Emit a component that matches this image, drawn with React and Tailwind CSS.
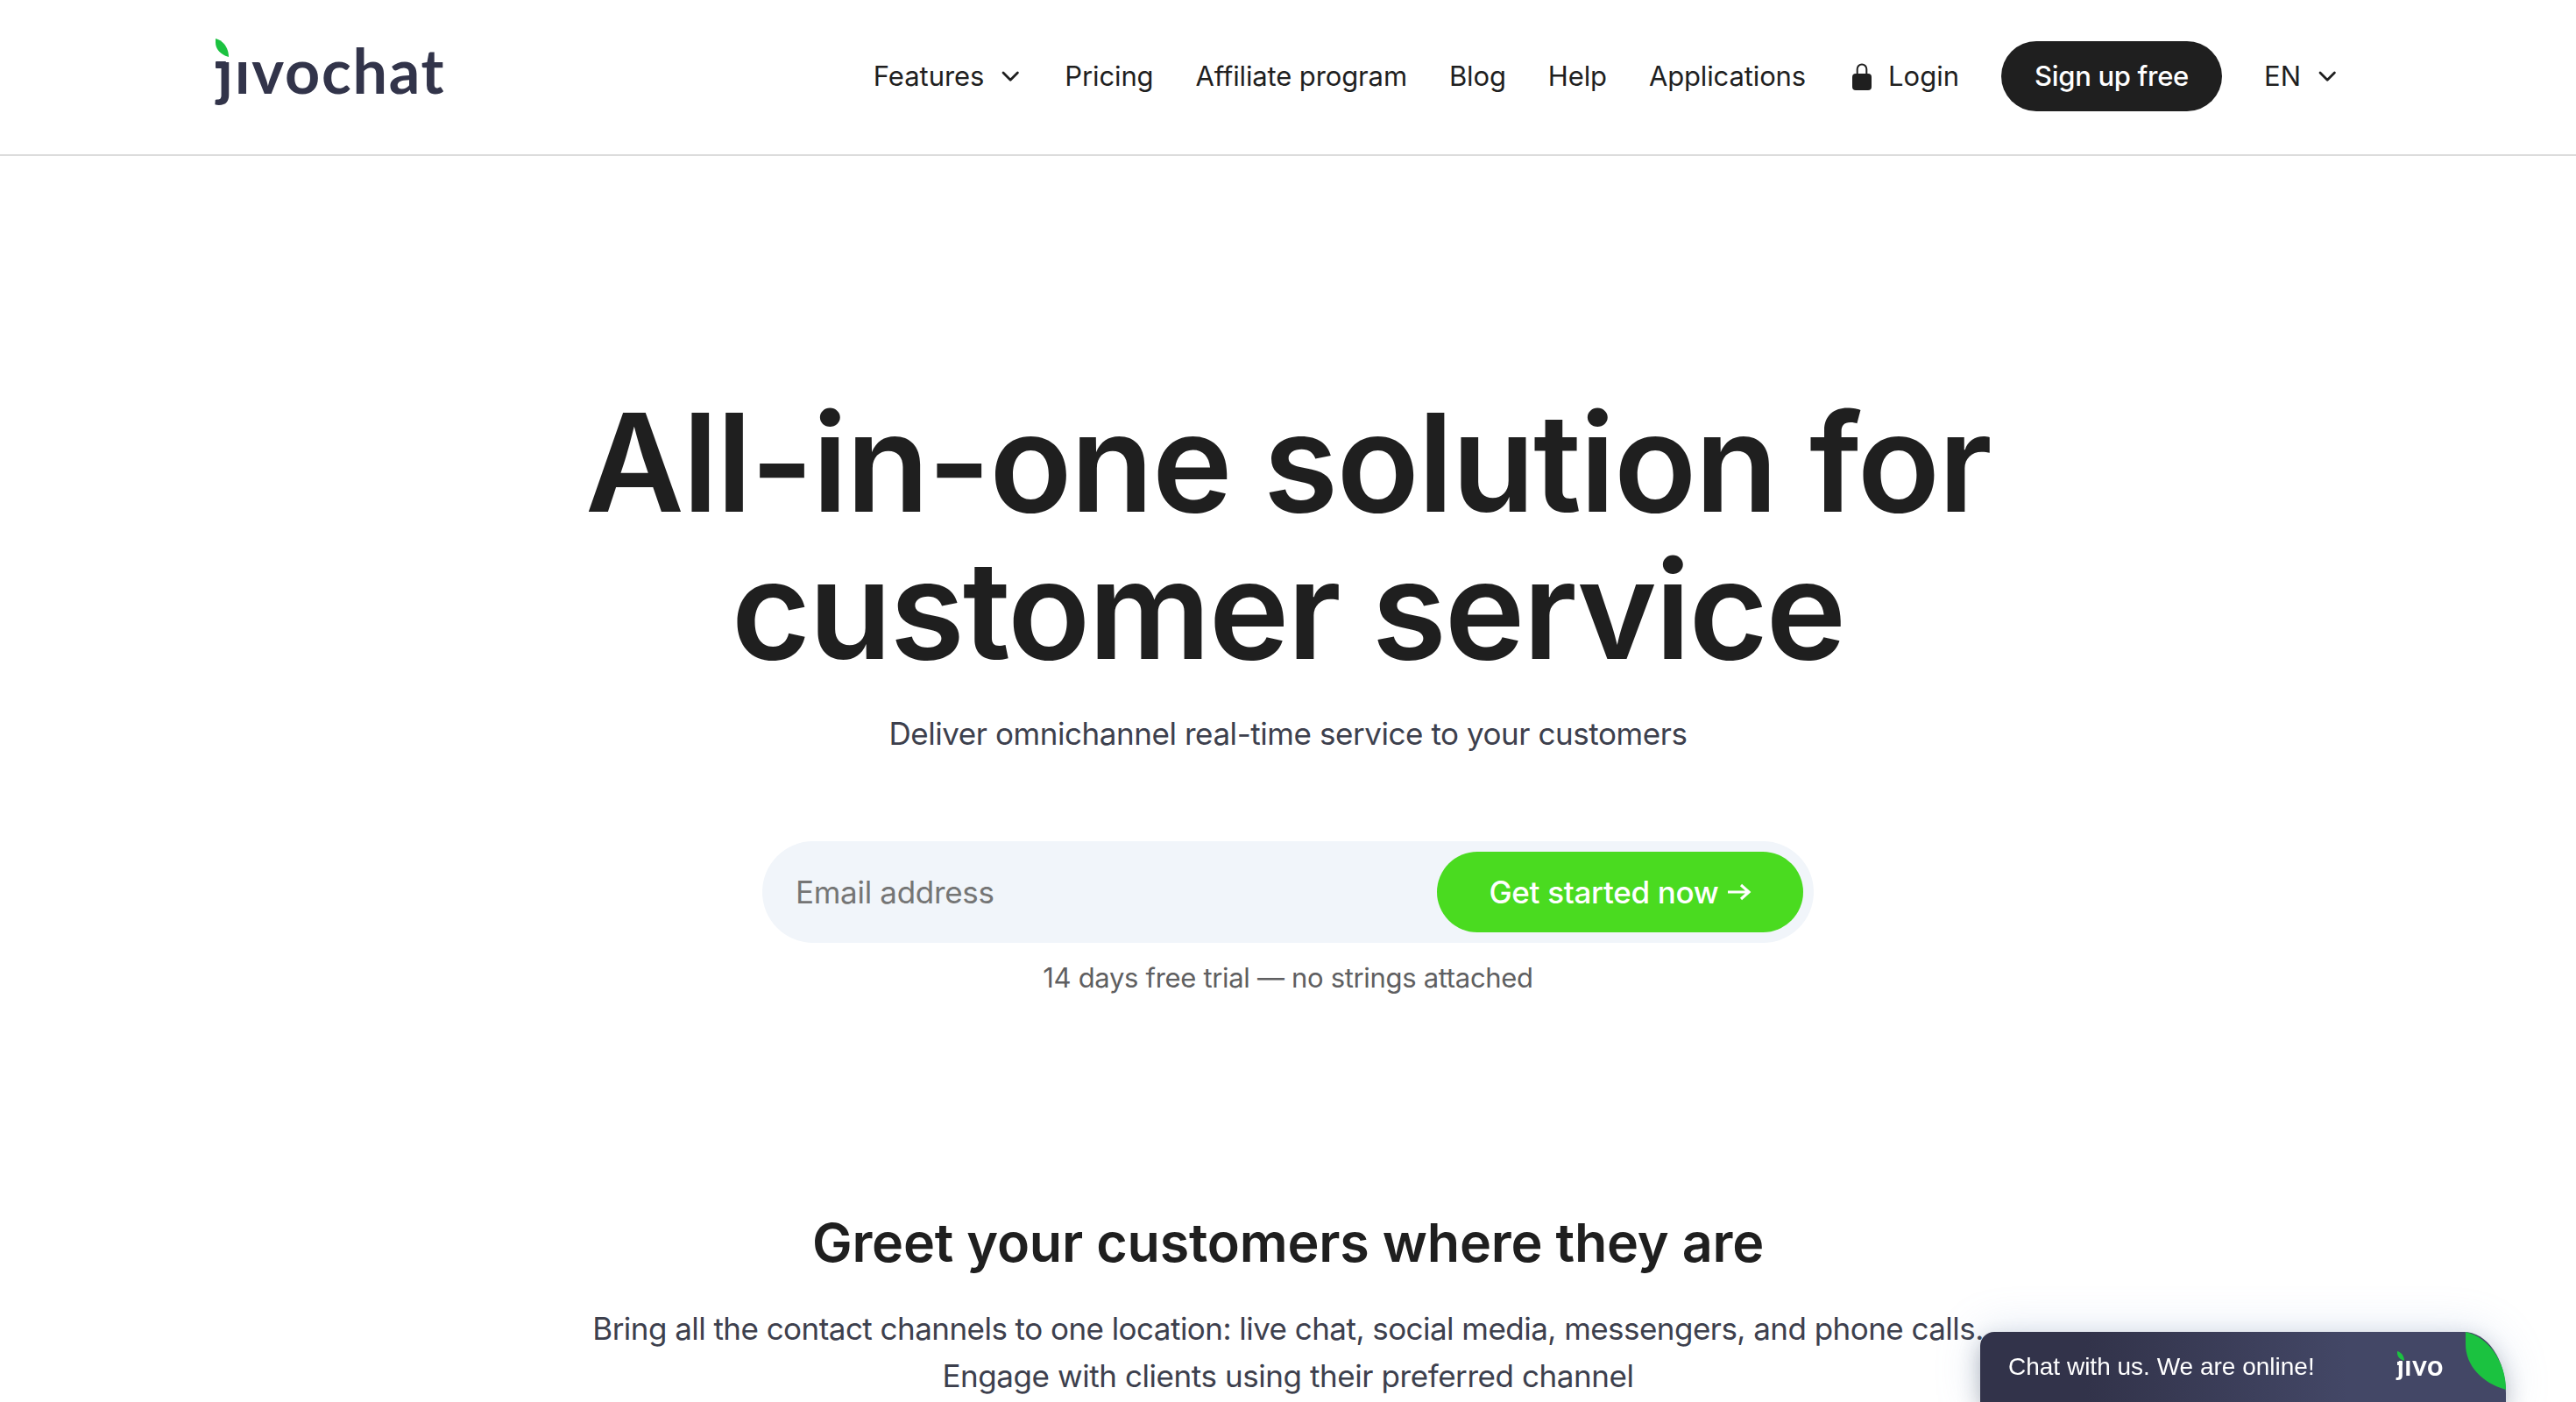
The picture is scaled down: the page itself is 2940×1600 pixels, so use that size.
import React from 'react';

const LINKS = ['Pricing', 'Affiliate program', 'Blog', 'Help', 'Applications'];

const Leaf = ({ className }) => (
  <svg viewBox="0 0 46 66" preserveAspectRatio="none" className={className}>
    <path d="M0 0C26 6 46 34 46 66C18 58 0 38 0 14Z" fill="#1bc240" />
  </svg>
);

const Chevron = () => (
  <svg viewBox="0 0 26 20" className="ml-[18px] h-5 w-[26px]" fill="none">
    <path d="M4 6L12.2 14.2L20.4 6" stroke="#1f1f1f" strokeWidth="2.8" strokeLinecap="round" strokeLinejoin="round" />
  </svg>
);

const Lock = () => (
  <svg viewBox="0 0 32 32" className="mr-[14px] h-8 w-8" fill="none">
    <path d="M10.7 14V7.8a5.3 5.3 0 0 1 10.6 0V14" stroke="#1f1f1f" strokeWidth="2" />
    <rect x="5" y="13" width="22" height="19" rx="4" fill="#1f1f1f" />
  </svg>
);

const Header = () => (
  <header className="flex h-[178px] items-start justify-between border-b-2 border-[#dcdcdc] pl-[246px] pr-[270px] pt-[47px]">
    <a className="relative flex h-20 items-center font-['Lato'] text-[70px] leading-none font-bold text-[#32344a]">
      <Leaf className="absolute -top-[3px] left-0 h-[21px] w-[15px]" />
      <span className="absolute top-[23px] left-0 h-[8px] w-[12px] rounded-[1px] bg-[#32344a]" />
      <span className="mb-[14px] ml-[2px] tracking-[1.8px]">ȷıvochat</span>
    </a>

    <nav className="flex h-20 items-center gap-12 text-[31px] leading-10 whitespace-nowrap">
      <a className="flex items-center tracking-[-0.05px]">
        Features
        <Chevron />
      </a>
      {LINKS.map((link) => (
        <a key={link} className="tracking-[-0.13px]">{link}</a>
      ))}
      <a className="flex items-center">
        <Lock />
        Login
      </a>
      <a className="flex h-20 w-[252px] items-center justify-center rounded-full bg-[#1f1f1f] font-medium tracking-[-0.3px] text-white">
        Sign up free
      </a>
      <a className="flex items-center">
        EN
        <Chevron />
      </a>
    </nav>
  </header>
);

const Hero = () => (
  <section className="flex flex-col items-center pt-[266px]">
    <h1 className="text-center text-[155px] leading-[168px] font-[580]">
      <span className="block tracking-[-1.75px]">All-in-one solution for</span>
      <span className="block tracking-[-2.1px]">customer service</span>
    </h1>
    <p className="mt-[30px] text-[35px] leading-[54px] tracking-[-0.44px] text-[#3d404d]">
      Deliver omnichannel real-time service to your customers
    </p>
    <form className="mt-24 flex h-[116px] w-[1200px] items-center rounded-full bg-[#f1f5fa] pr-3 pl-[38px]">
      <input
        placeholder="Email address"
        className="min-w-0 flex-1 bg-transparent text-[35px] tracking-[-0.3px] outline-none placeholder:text-[#757575]"
      />
      <button
        type="button"
        className="flex h-[92px] w-[418px] items-center justify-center rounded-full bg-[#4adb20] text-[35px] font-medium tracking-[-0.3px] text-white"
      >
        Get started now
        <svg viewBox="0 0 28 20" className="ml-[9px] h-5 w-7" fill="none">
          <path d="M1 10H25M16 2L25 10L16 18" stroke="white" strokeWidth="3.2" />
        </svg>
      </button>
    </form>
    <p className="mt-5 text-[31px] leading-10 tracking-[-0.32px] text-[#5f5f61]">
      14 days free trial — no strings attached
    </p>
  </section>
);

const Channels = () => (
  <section className="pt-[246px] text-center">
    <h2 className="text-[61px] leading-[72px] font-semibold tracking-[-0.2px]">Greet your customers where they are</h2>
    <p className="mt-[35px] text-[35px] leading-[54px] text-[#3d404d]">
      <span className="block tracking-[-0.54px]">
        Bring all the contact channels to one location: live chat, social media, messengers, and phone calls.
      </span>
      <span className="block tracking-[-0.43px]">Engage with clients using their preferred channel</span>
    </p>
  </section>
);

const ChatWidget = () => (
  <div className="fixed right-20 bottom-0 flex h-20 w-[600px] items-center rounded-tl-[16px] rounded-tr-[48px_70px] bg-linear-to-r from-[#32334a] from-20% to-[#434766] to-70% pl-8 font-['Liberation_Sans'] text-[28px] text-white shadow-[0_10px_24px_rgba(40,45,60,0.3),0_0_50px_rgba(130,160,210,0.28)]">
    <span>Chat with us. We are online!</span>
    <div className="relative mb-1 ml-[94px] font-['Lato'] text-[32px] leading-none font-bold tracking-[0.5px]">
      <Leaf className="absolute top-0 left-0 h-[11px] w-[8px]" />
      <span className="absolute top-[12px] left-0 h-[4px] w-[6px] bg-white" />
      ȷıvo
    </div>
    <Leaf className="absolute top-0 right-0 h-[66px] w-[46px]" />
  </div>
);

export default function App() {
  return (
    <div className="h-[1600px] overflow-hidden bg-white font-['Inter',sans-serif] text-[#1f1f1f]">
      <Header />
      <Hero />
      <Channels />
      <ChatWidget />
    </div>
  );
}
